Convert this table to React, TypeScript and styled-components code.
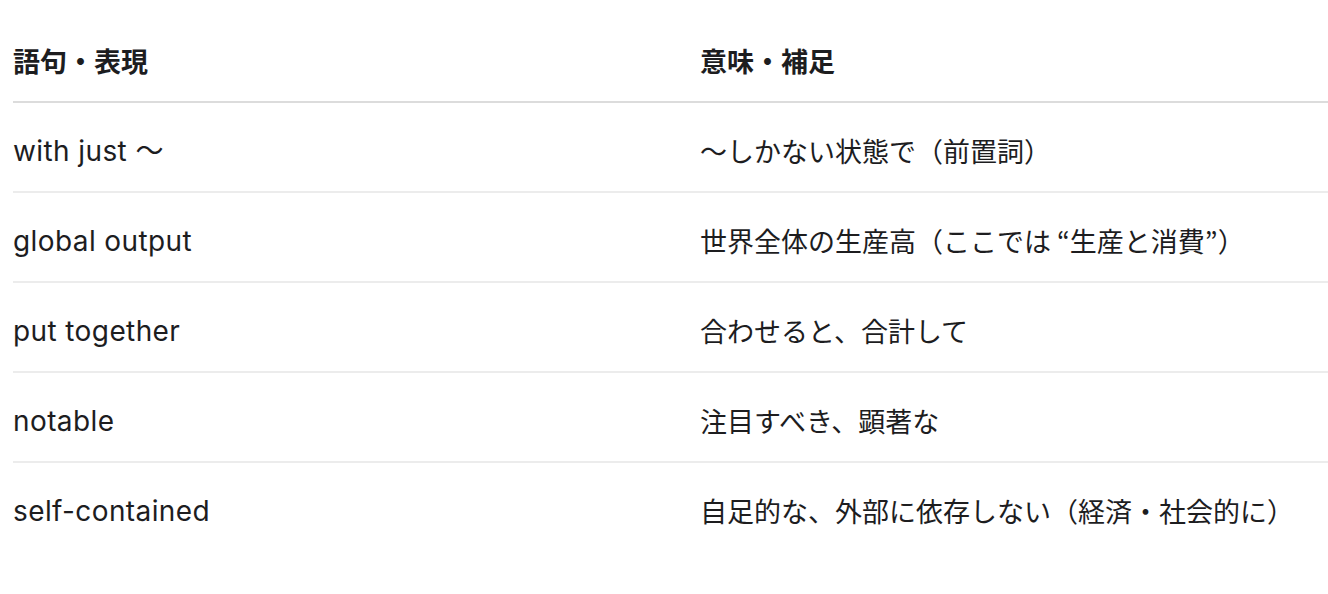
import React from "react";
import styled, { createGlobalStyle } from "styled-components";

const GlobalStyle = createGlobalStyle`
    html, body {
        margin: 0;
        padding: 0;
        background: #fff;
    }
    body {
        font-family: "Inter", "Noto Sans CJK JP", sans-serif;
        color: #1d1d1f;
    }
`;

const Page = styled.div`
    padding: 13px 0 0 13px;
    overflow: hidden;
`;

const Table = styled.div`
    display: grid;
    grid-template-columns: 687px 1fr;
    min-width: 1315px;
`;

interface ICell {
    head?: boolean;
    jp?: boolean;
}

const Cell = styled.div<ICell>`
    padding: 28px 0 20px 0;
    font-size: ${props => props.jp ? '27px' : '28px'};
    letter-spacing: ${props => props.jp ? '0' : '0.4px'};
    line-height: 40px;
    white-space: nowrap;
    font-weight: ${props => props.head ? 700 : 400};
    font-family: ${props => props.jp ? '"Noto Sans CJK JP", sans-serif' : '"Inter", "Noto Sans CJK JP", sans-serif'};
    border-bottom: 2px solid ${props => props.head ? '#dcdcdc' : '#ececec'};
`;

const LastCell = styled(Cell)`
    border-bottom: 0;
`;

const rows: [string, string][] = [
    ["with just 〜", "〜しかない状態で（前置詞）"],
    ["global output", "世界全体の生産高（ここでは “生産と消費”）"],
    ["put together", "合わせると、合計して"],
    ["notable", "注目すべき、顕著な"],
    ["self-contained", "自足的な、外部に依存しない（経済・社会的に）"],
];

export default function App() {
    return (
        <Page>
            <GlobalStyle />
            <Table>
                <Cell head jp>語句・表現</Cell>
                <Cell head jp>意味・補足</Cell>
                {rows.map(([term, meaning], i) => {
                    const C = i === rows.length - 1 ? LastCell : Cell;
                    return (
                        <React.Fragment key={term}>
                            <C>{term}</C>
                            <C jp>{meaning}</C>
                        </React.Fragment>
                    );
                })}
            </Table>
        </Page>
    );
}
